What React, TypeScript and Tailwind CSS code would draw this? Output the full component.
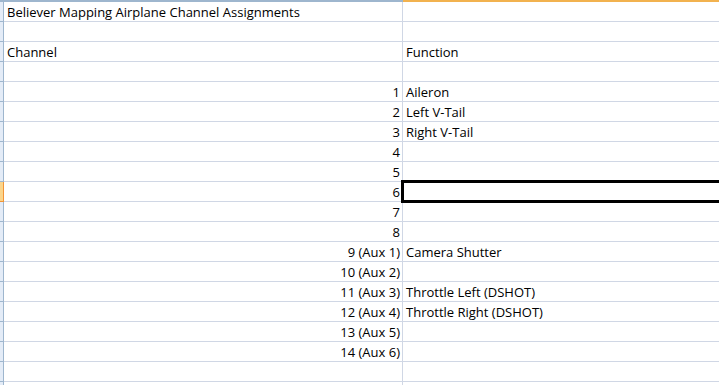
import React from "react";

type Row = { a?: string; b?: string; alignA?: "left" | "right" };

const rows: Row[] = [
  { a: "Believer Mapping Airplane Channel Assignments", alignA: "left" },
  {},
  { a: "Channel", b: "Function", alignA: "left" },
  {},
  { a: "1", b: "Aileron" },
  { a: "2", b: "Left V-Tail" },
  { a: "3", b: "Right V-Tail" },
  { a: "4" },
  { a: "5" },
  { a: "6" },
  { a: "7" },
  { a: "8" },
  { a: "9 (Aux 1)", b: "Camera Shutter" },
  { a: "10 (Aux 2)" },
  { a: "11 (Aux 3)", b: "Throttle Left (DSHOT)" },
  { a: "12 (Aux 4)", b: "Throttle Right (DSHOT)" },
  { a: "13 (Aux 5)" },
  { a: "14 (Aux 6)" },
  {},
  {},
];

const ACTIVE = 9;

export default function App() {
  return (
    <div
      className="w-[719px] h-[385px] overflow-hidden bg-white text-[13px] text-black"
      style={{ fontFamily: '"Open Sans", "Liberation Sans", Arial, sans-serif' }}
    >
      {/* column header edge */}
      <div className="flex h-[2px]">
        <div className="w-[403px] bg-[#9eb6ce]" />
        <div className="flex-1 bg-[#f2b24f]" />
      </div>
      {rows.map((r, i) => {
        const active = i === ACTIVE;
        return (
          <div key={i} className="flex h-[20px]">
            <div
              className={
                active
                  ? "w-[4px] shrink-0 bg-[#fbd58b] border-r border-b border-[#f29436]"
                  : "w-[4px] shrink-0 bg-[#e4ecf7] border-r border-b border-r-[#9eb6ce] border-b-[#9eb6ce]"
              }
            />
            <div
              className={
                "w-[399px] shrink-0 border-r border-b border-[#d0d7e5] flex items-center pt-[2px] leading-none whitespace-nowrap " +
                (r.alignA === "left" ? "justify-start pl-[3px]" : "justify-end pr-[2px]")
              }
            >
              {r.a}
            </div>
            <div className="relative flex-1 border-b border-[#d0d7e5] flex items-center pt-[2px] pl-[3px] leading-none whitespace-nowrap">
              {r.b}
              {active && (
                <div className="absolute -top-[2px] -left-[2px] -right-[40px] -bottom-[2px] border-[3px] border-black" />
              )}
            </div>
          </div>
        );
      })}
    </div>
  );
}
